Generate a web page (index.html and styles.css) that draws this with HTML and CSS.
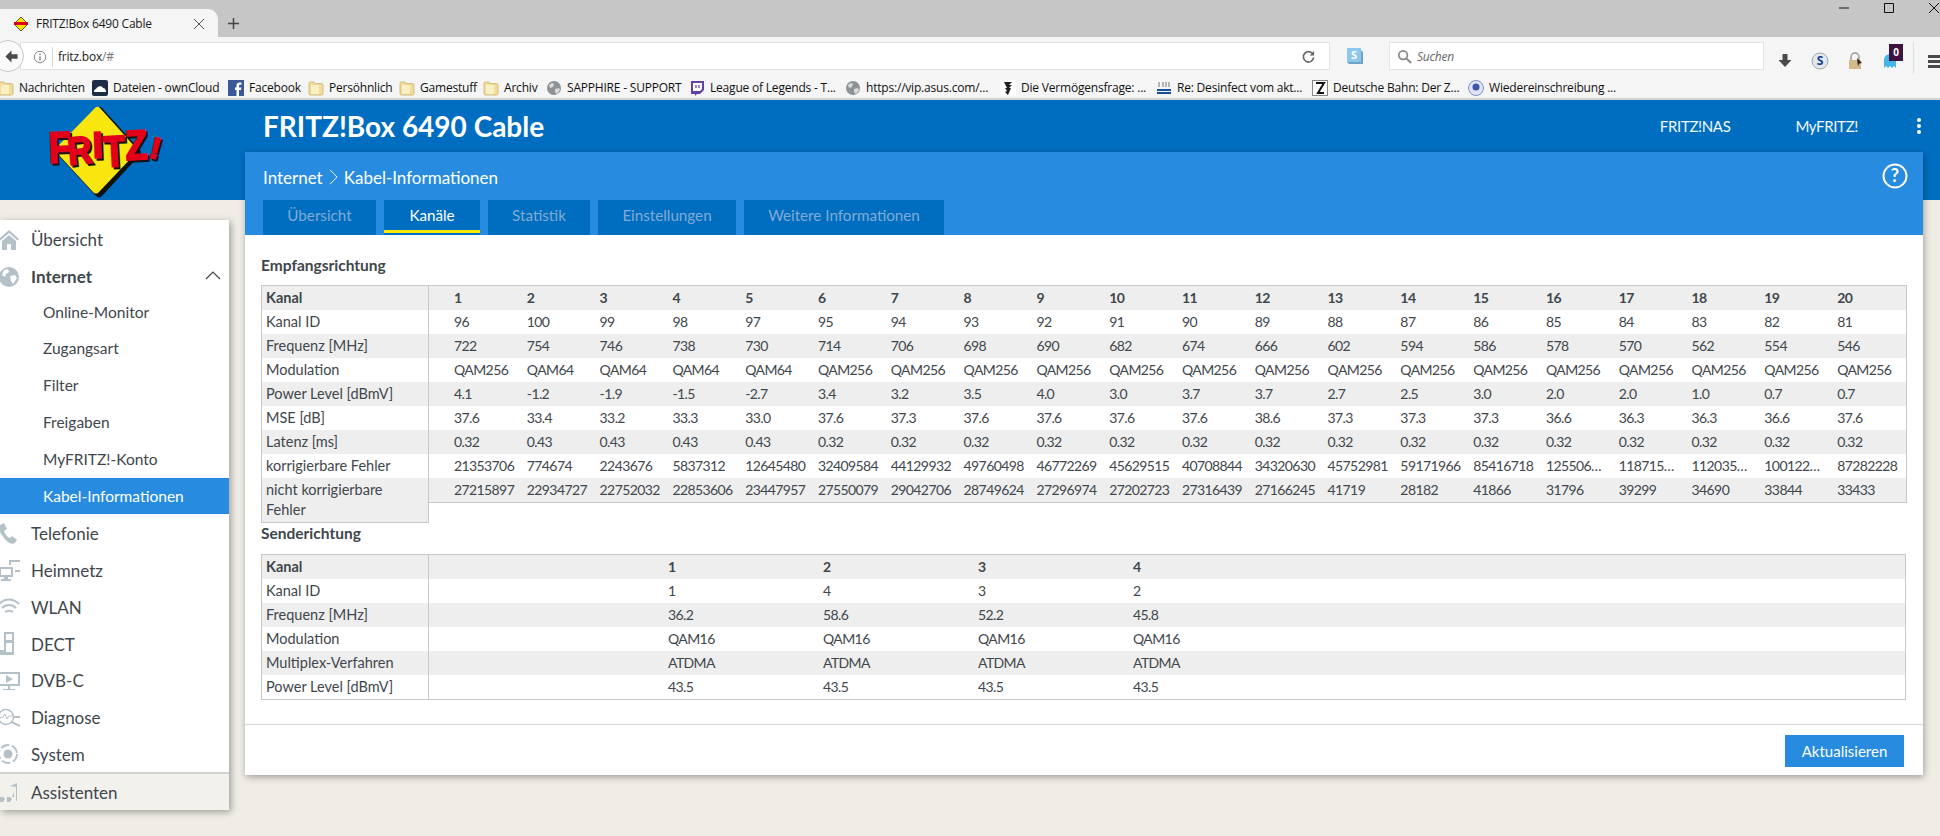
FILE: index.html
```html
<!DOCTYPE html>
<html lang="de">
<head>
<meta charset="utf-8">
<title>FRITZ!Box 6490 Cable</title>
<link rel="stylesheet" href="styles.css">
</head>
<body>
<svg class="defs" width="0" height="0" aria-hidden="true">
  <symbol id="folder" viewBox="0 0 16 16"><path d="M1 3.5c0-.8.6-1.5 1.4-1.5h3.4l1.4 1.6h6.4c.8 0 1.4.6 1.4 1.4v8.5c0 .8-.6 1.5-1.4 1.5H2.4c-.8 0-1.4-.7-1.4-1.5z" fill="#f1dc9a" stroke="#c9b26a" stroke-width=".8"/><path d="M3 5h8v9H3z" fill="#fbf0c4"/></symbol>
  <symbol id="globe" viewBox="0 0 16 16"><circle cx="8" cy="8" r="7" fill="#8c9296"/><path d="M3 5l3-2 2 1-1 3-3 1zM9 9l4-1 1 2-3 4-2-2z" fill="#d9dcde"/></symbol>
</svg>

<header class="browser">
  <div class="titlebar">
    <div class="tab">
      <svg class="favicon" viewBox="0 0 16 16"><path d="M8 1l7 7-7 7-7-7z" fill="#f7e000" stroke="#333" stroke-width=".8"/><path d="M1 6h14v3H1z" fill="#d8001c"/></svg>
      <span class="tab-title">FRITZ!Box 6490 Cable</span>
      <svg class="tab-close" viewBox="0 0 12 12"><path d="M1 1l10 10M11 1L1 11" stroke="#555" stroke-width="1" fill="none"/></svg>
    </div>
    <svg class="tab-new" viewBox="0 0 14 14"><path d="M7 1v12M1 7h12" stroke="#444" stroke-width="1.6" fill="none"/></svg>
    <div class="window-controls">
      <svg viewBox="0 0 12 12"><path d="M1 6h10" stroke="#111" fill="none"/></svg>
      <svg viewBox="0 0 12 12"><path d="M1.5 1.5h9v9h-9z" stroke="#111" fill="none"/></svg>
      <svg viewBox="0 0 12 12"><path d="M1 1l10 10M11 1L1 11" stroke="#111" fill="none"/></svg>
    </div>
  </div>
  <div class="toolbar">
    <div class="back"><svg viewBox="0 0 16 16"><path d="M8 1.500L1.500 8 8 14.500V10.500h6.500v-5H8z" fill="#4a4a4a"/></svg></div>
    <div class="urlbar">
      <svg class="info" viewBox="0 0 16 16"><circle cx="8" cy="8" r="6.500" fill="none" stroke="#777"/><path d="M8 7v5M8 4v1.600" stroke="#777" stroke-width="1.400"/></svg>
      <span class="url">fritz.box<span class="url-hash">/#</span></span>
      <svg class="reload" viewBox="0 0 16 16"><path d="M13 6a5.500 5.500 0 1 0 .5 3" fill="none" stroke="#666" stroke-width="1.800"/><path d="M14 2v5H9z" fill="#666"/></svg>
    </div>
    <svg class="tool-s" viewBox="0 0 18 18"><path d="M1 1h14v14H1z" fill="#8cc8ec"/><path d="M15 3l2 2v12H3l-2-2h14z" fill="#6fa3c4"/><text x="8" y="12" class="tool-s-letter">S</text></svg>
    <div class="searchbar">
      <svg viewBox="0 0 16 16"><circle cx="6.500" cy="6.500" r="4.600" fill="none" stroke="#888" stroke-width="1.800"/><path d="M10 10l5 5" stroke="#888" stroke-width="2.200"/></svg>
      <span>Suchen</span>
    </div>
    <div class="tools">
      <svg viewBox="0 0 18 18"><path d="M6.500 2h5v6h4L9 15 2.500 8h4z" fill="#4a4a4a"/></svg>
      <svg viewBox="0 0 18 18"><circle cx="9" cy="9" r="8" fill="#e4e8ee" stroke="#9aa"/><text x="9" y="13" class="tool-sb">S</text></svg>
      <svg viewBox="0 0 18 18"><path d="M5 8V5a4 4 0 0 1 8 0v3" fill="none" stroke="#999" stroke-width="1.500"/><path d="M3 8h12v9H3z" fill="#d4b98a"/><path d="M11 6l5 5-3 .5-1 3z" fill="#222"/></svg>
      <div class="ghost">
        <svg viewBox="0 0 18 18"><path d="M3 16V8a6 6 0 0 1 12 0v8l-2-2-2 2-2-2-2 2-2-2z" fill="#45b5e8"/></svg>
        <span class="badge">0</span>
      </div>
      <span class="tool-sep"></span>
      <svg viewBox="0 0 18 18"><path d="M1 3h16v3H1zM1 8h16v3H1zM1 13h16v3H1z" fill="#4a4a4a"/></svg>
    </div>
  </div>
  <nav class="bookmarks">
    <a class="bm"><svg><use href="#folder"/></svg><span>Nachrichten</span></a>
    <a class="bm"><svg viewBox="0 0 16 16"><rect width="16" height="16" rx="2" fill="#1d2d44"/><path d="M2 12c0-2 1-3 2-3 1-3 6-4 7-1 2 0 3 2 3 4z" fill="#fff"/></svg><span>Dateien - ownCloud</span></a>
    <a class="bm"><svg viewBox="0 0 16 16"><rect width="16" height="16" fill="#3b5998"/><path d="M11 16V10h2l.4-2.500H11V6c0-.8.3-1.200 1.200-1.200h1.300V2.500H11.500C9.500 2.500 8.500 3.700 8.500 5.500v2H7V10h1.500v6z" fill="#fff"/></svg><span>Facebook</span></a>
    <a class="bm"><svg><use href="#folder"/></svg><span>Persöhnlich</span></a>
    <a class="bm"><svg><use href="#folder"/></svg><span>Gamestuff</span></a>
    <a class="bm"><svg><use href="#folder"/></svg><span>Archiv</span></a>
    <a class="bm"><svg><use href="#globe"/></svg><span>SAPPHIRE - SUPPORT</span></a>
    <a class="bm"><svg viewBox="0 0 16 16"><path d="M2 1h13v9l-4 4H8l-2 2v-2H2z" fill="#6441a4"/><path d="M4 3h9v6l-2 2H4z" fill="#fff"/><path d="M7 5v3M10 5v3" stroke="#6441a4" stroke-width="1.300"/></svg><span>League of Legends - T...</span></a>
    <a class="bm"><svg><use href="#globe"/></svg><span>https://vip.asus.com/...</span></a>
    <a class="bm"><svg viewBox="0 0 16 16"><rect width="16" height="16" fill="#fff"/><path d="M4 2h8L9 5h3l-3 3h2l-3 7-3-3 2-1-2-3h2z" fill="#222"/></svg><span>Die Vermögensfrage: ...</span></a>
    <a class="bm"><svg viewBox="0 0 16 16"><path d="M3 2v5M7 2v5M10 2v5M13 2v5" stroke="#777"/><path d="M1 10h14M1 13h14" stroke="#1450a0" stroke-width="2"/></svg><span>Re: Desinfect vom akt...</span></a>
    <a class="bm"><svg viewBox="0 0 16 16"><rect x=".5" y=".5" width="15" height="15" fill="#fff" stroke="#888"/><path d="M4 3h8L6 13h6" fill="none" stroke="#111" stroke-width="2"/></svg><span>Deutsche Bahn: Der Z...</span></a>
    <a class="bm"><svg viewBox="0 0 16 16"><circle cx="8" cy="8" r="7.500" fill="#dfe4f3" stroke="#7d8ecb"/><circle cx="8" cy="7" r="3.500" fill="#3c55b0"/></svg><span>Wiedereinschreibung ...</span></a>
  </nav>
</header>

<div class="app">
  <div class="app-header">
    <svg class="logo" viewBox="0 0 130 100" role="img" aria-label="FRITZ!">
      <path d="M48 9Q51 5 54 8L92 50Q94 53 91 56L54 96Q51 99 48 96L11 56Q9 53 11 50Z" fill="#111"/>
      <path d="M46 9Q49 5 52 8L88 48Q90 51 87 54L51 92Q48 95 45 92L9 53Q7 50 9 47Z" fill="#f9e60f"/>
      <g class="logo-shadow">
        <text transform="translate(3 65) rotate(-2) scale(.84 1)" class="l-f">F</text>
        <text transform="translate(23 67) rotate(-6) scale(.86 1)" class="l-r">R</text>
        <text transform="translate(47 60) rotate(-2)" class="l-i">I</text>
        <text transform="translate(58 69) rotate(-3) scale(.82 1)" class="l-f">T</text>
        <text transform="translate(80 62) rotate(-3) scale(.86 1)" class="l-z">Z</text>
        <text transform="translate(102 59) rotate(14)" class="l-x">!</text>
      </g>
      <g class="logo-red">
        <text transform="translate(1 63) rotate(-2) scale(.84 1)" class="l-f">F</text>
        <text transform="translate(21 65) rotate(-6) scale(.86 1)" class="l-r">R</text>
        <text transform="translate(45 58) rotate(-2)" class="l-i">I</text>
        <text transform="translate(56 67) rotate(-3) scale(.82 1)" class="l-f">T</text>
        <text transform="translate(78 60) rotate(-3) scale(.86 1)" class="l-z">Z</text>
        <text transform="translate(100 57) rotate(14)" class="l-x">!</text>
      </g>
    </svg>
    <h1 class="app-title">FRITZ!Box 6490 Cable</h1>
    <nav class="app-links">
      <a>FRITZ!NAS</a>
      <a>MyFRITZ!</a>
      <svg class="kebab" viewBox="0 0 6 18"><circle cx="3" cy="3" r="2" fill="#fff"/><circle cx="3" cy="9" r="2" fill="#fff"/><circle cx="3" cy="15" r="2" fill="#fff"/></svg>
    </nav>
  </div>

  <div class="app-body">
    <aside class="sidebar">
      <a class="nav-item"><svg viewBox="0 0 24 24"><path d="M3 13L13 4l10 9-1.500 1.500L13 7l-8.500 7.500z" /><path d="M6 15l7-6 7 6v9h-5v-6h-4v6H6z"/></svg><span>Übersicht</span></a>
      <a class="nav-item nav-open"><svg viewBox="0 0 24 24"><circle cx="13" cy="14" r="10"/><path d="M8 7l4-1 1 3-3 2-1 3-3-2zM14 13l5-1 2 3-4 6-2-3z" fill="#fff"/></svg><span>Internet</span><svg class="chev" viewBox="0 0 16 10"><path d="M1 9l7-7 7 7" fill="none" stroke="#444" stroke-width="1.200"/></svg></a>
      <a class="nav-sub">Online-Monitor</a>
      <a class="nav-sub">Zugangsart</a>
      <a class="nav-sub">Filter</a>
      <a class="nav-sub">Freigaben</a>
      <a class="nav-sub">MyFRITZ!-Konto</a>
      <a class="nav-sub nav-active">Kabel-Informationen</a>
      <a class="nav-item"><svg viewBox="0 0 24 24"><path d="M4 4l4-2 3 6-3 2c1 3 3 6 6 7l2-2 5 4-2 3c-3 2-7 0-11-5C4 12 2 8 4 4z"/></svg><span>Telefonie</span></a>
      <a class="nav-item"><svg viewBox="0 0 24 24"><path d="M13 2h13v12h-7v-2h5V4h-9v3h-2z"/><path d="M3 9h14v10h-5v2h3v2H5v-2h3v-2H3zM5 11v6h10v-6z" fill-rule="evenodd"/></svg><span>Heimnetz</span></a>
      <a class="nav-item"><svg viewBox="0 0 24 24"><path d="M3 10c6-6 14-6 20 0M6 14c4-4 10-4 14 0M9 18c3-2 5-2 8 0" fill="none" stroke="#b5c1c8" stroke-width="2"/></svg><span>WLAN</span></a>
      <a class="nav-item"><svg viewBox="0 0 24 24"><path d="M8 1h10v23H4v-5h4zM10 3v6h6V3zM10 12v9h6v-9z" fill-rule="evenodd"/></svg><span>DECT</span></a>
      <a class="nav-item"><svg viewBox="0 0 24 24"><path d="M2 4h22v14H14v3h5v1H7v-1h5v-3H2zM4 6v10h18V6z" fill-rule="evenodd"/><path d="M10 7l7 4-7 4z"/></svg><span>DVB-C</span></a>
      <a class="nav-item"><svg viewBox="0 0 24 24"><circle cx="10" cy="12" r="7.500" fill="none" stroke="#b5c1c8" stroke-width="1.600"/><path d="M4 13l3-1 2-3 2 5 2-3h3" fill="none" stroke="#b5c1c8"/><path d="M17 11h8v2h-7zM16 16l8 4v2l-9-4z"/></svg><span>Diagnose</span></a>
      <a class="nav-item"><svg viewBox="0 0 24 24"><circle cx="12" cy="12" r="4.500"/><circle cx="12" cy="12" r="9" fill="none" stroke="#b5c1c8" stroke-width="1.800" stroke-dasharray="9 2.500"/></svg><span>System</span></a>
      <a class="nav-item nav-wizard"><svg viewBox="0 0 24 24"><path d="M21 3v18h-1V7l-6-1zM3 17h4l2 2-2 3H3zM11 17h3l2 2-2 3h-3zM18 12v5h-2z"/></svg><span>Assistenten</span></a>
    </aside>

    <main class="panel">
      <div class="panel-head">
        <div class="crumbs-row">
          <div class="crumbs">Internet<svg viewBox="0 0 10 18"><path d="M1 1l8 8-8 8" fill="none" stroke="#fff" stroke-width="1"/></svg>Kabel-Informationen</div>
          <svg class="help" viewBox="0 0 26 26"><circle cx="13" cy="13" r="11.500" fill="none" stroke="#fff" stroke-width="2"/><text x="13" y="19" class="help-q">?</text></svg>
        </div>
        <div class="tabs">
          <a class="tab-link">Übersicht</a>
          <a class="tab-link tab-current">Kanäle</a>
          <a class="tab-link">Statistik</a>
          <a class="tab-link">Einstellungen</a>
          <a class="tab-link">Weitere Informationen</a>
        </div>
      </div>

      <div class="panel-body">
        <h2 class="section-title">Empfangsrichtung</h2>
        <div class="split">
          <table class="labels">
            <tr><th>Kanal</th></tr>
            <tr><td>Kanal ID</td></tr>
            <tr><td>Frequenz [MHz]</td></tr>
            <tr><td>Modulation</td></tr>
            <tr><td>Power Level [dBmV]</td></tr>
            <tr><td>MSE [dB]</td></tr>
            <tr><td>Latenz [ms]</td></tr>
            <tr><td>korrigierbare Fehler</td></tr>
            <tr><td>nicht korrigierbare<br>Fehler</td></tr>
          </table>
          <table class="data data-rx">
            <tr><th>1</th><th>2</th><th>3</th><th>4</th><th>5</th><th>6</th><th>7</th><th>8</th><th>9</th><th>10</th><th>11</th><th>12</th><th>13</th><th>14</th><th>15</th><th>16</th><th>17</th><th>18</th><th>19</th><th>20</th></tr>
            <tr><td>96</td><td>100</td><td>99</td><td>98</td><td>97</td><td>95</td><td>94</td><td>93</td><td>92</td><td>91</td><td>90</td><td>89</td><td>88</td><td>87</td><td>86</td><td>85</td><td>84</td><td>83</td><td>82</td><td>81</td></tr>
            <tr><td>722</td><td>754</td><td>746</td><td>738</td><td>730</td><td>714</td><td>706</td><td>698</td><td>690</td><td>682</td><td>674</td><td>666</td><td>602</td><td>594</td><td>586</td><td>578</td><td>570</td><td>562</td><td>554</td><td>546</td></tr>
            <tr><td>QAM256</td><td>QAM64</td><td>QAM64</td><td>QAM64</td><td>QAM64</td><td>QAM256</td><td>QAM256</td><td>QAM256</td><td>QAM256</td><td>QAM256</td><td>QAM256</td><td>QAM256</td><td>QAM256</td><td>QAM256</td><td>QAM256</td><td>QAM256</td><td>QAM256</td><td>QAM256</td><td>QAM256</td><td>QAM256</td></tr>
            <tr><td>4.1</td><td>-1.2</td><td>-1.9</td><td>-1.5</td><td>-2.7</td><td>3.4</td><td>3.2</td><td>3.5</td><td>4.0</td><td>3.0</td><td>3.7</td><td>3.7</td><td>2.7</td><td>2.5</td><td>3.0</td><td>2.0</td><td>2.0</td><td>1.0</td><td>0.7</td><td>0.7</td></tr>
            <tr><td>37.6</td><td>33.4</td><td>33.2</td><td>33.3</td><td>33.0</td><td>37.6</td><td>37.3</td><td>37.6</td><td>37.6</td><td>37.6</td><td>37.6</td><td>38.6</td><td>37.3</td><td>37.3</td><td>37.3</td><td>36.6</td><td>36.3</td><td>36.3</td><td>36.6</td><td>37.6</td></tr>
            <tr><td>0.32</td><td>0.43</td><td>0.43</td><td>0.43</td><td>0.43</td><td>0.32</td><td>0.32</td><td>0.32</td><td>0.32</td><td>0.32</td><td>0.32</td><td>0.32</td><td>0.32</td><td>0.32</td><td>0.32</td><td>0.32</td><td>0.32</td><td>0.32</td><td>0.32</td><td>0.32</td></tr>
            <tr><td>21353706</td><td>774674</td><td>2243676</td><td>5837312</td><td>12645480</td><td>32409584</td><td>44129932</td><td>49760498</td><td>46772269</td><td>45629515</td><td>40708844</td><td>34320630</td><td>45752981</td><td>59171966</td><td>85416718</td><td>125506…</td><td>118715…</td><td>112035…</td><td>100122…</td><td>87282228</td></tr>
            <tr><td>27215897</td><td>22934727</td><td>22752032</td><td>22853606</td><td>23447957</td><td>27550079</td><td>29042706</td><td>28749624</td><td>27296974</td><td>27202723</td><td>27316439</td><td>27166245</td><td>41719</td><td>28182</td><td>41866</td><td>31796</td><td>39299</td><td>34690</td><td>33844</td><td>33433</td></tr>
          </table>
        </div>

        <h2 class="section-title section-tx">Senderichtung</h2>
        <div class="split">
          <table class="labels">
            <tr><th>Kanal</th></tr>
            <tr><td>Kanal ID</td></tr>
            <tr><td>Frequenz [MHz]</td></tr>
            <tr><td>Modulation</td></tr>
            <tr><td>Multiplex-Verfahren</td></tr>
            <tr><td>Power Level [dBmV]</td></tr>
          </table>
          <table class="data data-tx">
            <tr><th>1</th><th>2</th><th>3</th><th>4</th><th class="fill"></th></tr>
            <tr><td>1</td><td>4</td><td>3</td><td>2</td><td class="fill"></td></tr>
            <tr><td>36.2</td><td>58.6</td><td>52.2</td><td>45.8</td><td class="fill"></td></tr>
            <tr><td>QAM16</td><td>QAM16</td><td>QAM16</td><td>QAM16</td><td class="fill"></td></tr>
            <tr><td>ATDMA</td><td>ATDMA</td><td>ATDMA</td><td>ATDMA</td><td class="fill"></td></tr>
            <tr><td>43.5</td><td>43.5</td><td>43.5</td><td>43.5</td><td class="fill"></td></tr>
          </table>
        </div>
      </div>

      <div class="panel-foot">
        <button class="btn" type="button">Aktualisieren</button>
      </div>
    </main>
  </div>
</div>
</body>
</html>
```
FILE: styles.css
```css
* { box-sizing: border-box; }
html, body { margin: 0; padding: 0; }
body {
  width: 1940px;
  height: 836px;
  overflow: hidden;
  background: #f0ede6;
  font-family: "Lato", "Noto Sans", sans-serif;
  color: #3f464c;
}
a { display: block; }
.defs { position: absolute; }

/* browser chrome */
.browser { font-family: "Open Sans", "Noto Sans", sans-serif; font-size: 12px; color: #1a1a1a; letter-spacing: -.2px; }
.titlebar { height: 37px; background: #c6c6c6; display: flex; align-items: flex-end; }
.tab {
  width: 218px; height: 28px; background: #f5f5f5;
  border-radius: 0 10px 0 0;
  display: flex; align-items: center;
  padding: 1px 13px 0 13px;
}
.favicon { width: 16px; height: 16px; margin-right: 7px; }
.tab-title { flex: 1; }
.tab-close { width: 12px; height: 12px; }
.tab-new { width: 13px; height: 13px; margin: 0 0 7px 9px; }
.window-controls { margin-left: auto; display: flex; align-self: flex-start; gap: 33px; padding: 2px 0 0 0; }
.window-controls svg { width: 12px; height: 12px; }

.toolbar { height: 33px; background: #f5f5f5; display: flex; align-items: flex-start; padding-top: 5px; position: relative; }
.back {
  position: absolute; left: -8px; top: 3px;
  width: 32px; height: 32px; border-radius: 50%;
  background: #fafafa; border: 1px solid #c8c8c8;
  display: flex; align-items: center; justify-content: center;
  padding-left: 6px; z-index: 1;
}
.back svg { width: 15px; height: 15px; }
.urlbar {
  flex: none; width: 1310px; height: 28px; margin-left: 20px; background: #fff;
  border: 1px solid #e3e3e3; display: flex; align-items: center; padding: 1px 0 0 12px;
}
.info { width: 14px; height: 14px; margin-right: 5px; }
.url { border-left: 1px solid #d8d8d8; padding-left: 5px; line-height: 20px; }
.url-hash { color: #777; }
.reload { width: 15px; height: 15px; margin-left: auto; margin-right: 13px; }
.tool-s { flex: none; width: 18px; height: 18px; margin: 5px 0 0 16px; }
.tool-s-letter { font: 700 11px "Open Sans", sans-serif; fill: #fff; text-anchor: middle; }
.searchbar {
  flex: none; width: 375px; height: 28px; margin-left: 25px; background: #fff; border: 1px solid #e3e3e3;
  display: flex; align-items: center; gap: 5px; padding-left: 7px; font-style: italic; color: #666;
}
.searchbar svg { width: 15px; height: 15px; }
.tools { flex: none; display: flex; align-items: center; gap: 17px; padding: 5px 0 0 12px; }
.tools svg { width: 18px; height: 18px; display: block; }
.tool-sb { font: 700 12px "Open Sans", sans-serif; fill: #123f8c; text-anchor: middle; }
.ghost { position: relative; width: 18px; height: 18px; }
.badge {
  position: absolute; left: 8px; top: -8px; width: 14px; height: 17px;
  background: #3d1440; color: #fff; font: 700 10px/16px "Open Sans", sans-serif; text-align: center; letter-spacing: 0;
}
.tool-sep { width: 1px; height: 32px; background: #dedede; margin: -5px -4px 0 -3px; }
.bookmarks {
  height: 30px; background: #f5f5f5; border-bottom: 2px solid #d4d4d4; margin-left: -2px;
  display: grid; align-items: center; padding-top: 7px;
  grid-template-columns: 94px 136px 80px 91px 84px 63px 143px 156px 155px 156px 156px 156px 160px;
}
.bm { display: flex; align-items: center; gap: 5px; white-space: nowrap; color: #111; }
.bm svg { width: 16px; height: 16px; flex: none; }

/* app header */
.app-header { height: 100px; background: #006ec0; display: flex; align-items: flex-start; color: #fff; }
.logo { width: 130px; height: 100px; flex: none; margin-left: 48px; }
.logo text { font-family: "Liberation Sans", sans-serif; font-weight: 700; }
.logo-shadow { fill: #111; stroke: #111; stroke-width: 1.8px; }
.logo-red { fill: #e2001a; stroke: #e2001a; stroke-width: 1.8px; }
.l-f { font-size: 44px; }
.l-r { font-size: 39px; }
.l-i { font-size: 37px; }
.l-z { font-size: 42px; }
.l-x { font-size: 30px; }
.app-title {
  margin: 0 0 0 85px; font-size: 28px; line-height: 52px; font-weight: 700; white-space: nowrap;
}
.app-links { margin-left: auto; display: flex; align-items: center; height: 52px; font-size: 15px; letter-spacing: -.35px; color: #f2f8fc; }
.app-links a:first-child { margin-right: 65px; }
.kebab { width: 6px; height: 18px; margin: 0 18px 0 58px; }

/* layout */
.app-body { display: flex; align-items: flex-start; margin-top: -48px; position: relative; }
.sidebar {
  width: 229px; margin-top: 68px; background: #fff; flex: none;
  box-shadow: 2px 2px 7px rgba(0,0,0,.35);
  font-size: 17px;
}
.nav-item { height: 36.8px; display: flex; align-items: center; margin-left: -4px; gap: 11px; white-space: nowrap; }
.nav-item span { padding-top: 2px; }
.nav-item svg { width: 24px; height: 24px; fill: #b5c1c8; flex: none; }
.nav-open { font-weight: 700; padding-right: 8px; }
.nav-item .chev { width: 16px; height: 10px; margin-left: auto; }
.nav-sub { height: 36.8px; line-height: 37.5px; padding-left: 43px; font-size: 15.5px; }
.nav-active { background: #278ce0; color: #fff; }
.nav-wizard { height: 38px; margin-left: 0; background: #f3f1ec; border-top: 2px solid #d2d2d0; }
.nav-wizard svg { margin-left: -4px; }

.panel {
  width: 1678px; margin-left: 16px; background: #fff; flex: none;
  box-shadow: 1px 2px 7px rgba(0,0,0,.35);
}
.panel-head { background: #278ce0; height: 83px; color: #fff; padding: 0 0 0 18px; }
.crumbs-row { height: 48px; display: flex; align-items: center; justify-content: space-between; padding-right: 15px; }
.crumbs { font-size: 17px; display: flex; align-items: center; gap: 6px; padding-top: 2px; }
.crumbs svg { width: 9px; height: 18px; }
.help { width: 26px; height: 26px; }
.help-q { font: 700 18px "Lato", sans-serif; fill: #fff; text-anchor: middle; }
.tabs { display: grid; grid-template-columns: 113px 96px 102px 138px 200px; gap: 8px; height: 35px; }
.tab-link { background: #006ec0; color: #80abd4; text-align: center; line-height: 31px; font-size: 15.2px; position: relative; }
.tab-current { color: #fff; }
.tab-current::after { content: ""; position: absolute; left: 0; right: 0; bottom: 2px; height: 3px; background: #fbea00; }

.panel-body { padding: 0 16px; }
.section-title { margin: 0; font-size: 15.5px; font-weight: 700; line-height: 20px; padding-top: 20px; height: 50px; }
.section-tx { padding-top: 0; height: 31px; }
.split { display: flex; align-items: flex-start; }

table { border-collapse: separate; border-spacing: 0; table-layout: fixed; line-height: 20px; border: 1px solid #c8c8c4; }
th, td { height: 24px; padding: 2px 4px; text-align: left; overflow: hidden; white-space: nowrap; text-overflow: ellipsis; font-weight: 400; }
th { font-weight: 700; }
tr:nth-child(odd) { background: #eee; }
.labels { width: 168px; flex: none; font-size: 14.5px; }
.labels td { white-space: normal; }
.data { border-left: 0; flex: none; width: 1477px; font-size: 14px; letter-spacing: -.6px; }
.data-rx td:first-child, .data-rx th:first-child { padding-left: 25px; width: 93.8px; }
.data-rx td, .data-rx th { width: 72.8px; }
.data-tx td, .data-tx th { width: 155px; }
.data-tx tr > :first-child { width: 390px; padding-left: 239px; }
.data-tx .fill { width: auto; }

.panel-foot { margin-top: 24px; height: 51px; border-top: 1px solid #d6d6d4; display: flex; justify-content: flex-end; padding: 10px 19px 0 0; }
.btn { width: 119px; height: 32px; background: #278ce0; border: 0; color: #fff; font: 400 15px "Lato", sans-serif; padding: 0; }
```
